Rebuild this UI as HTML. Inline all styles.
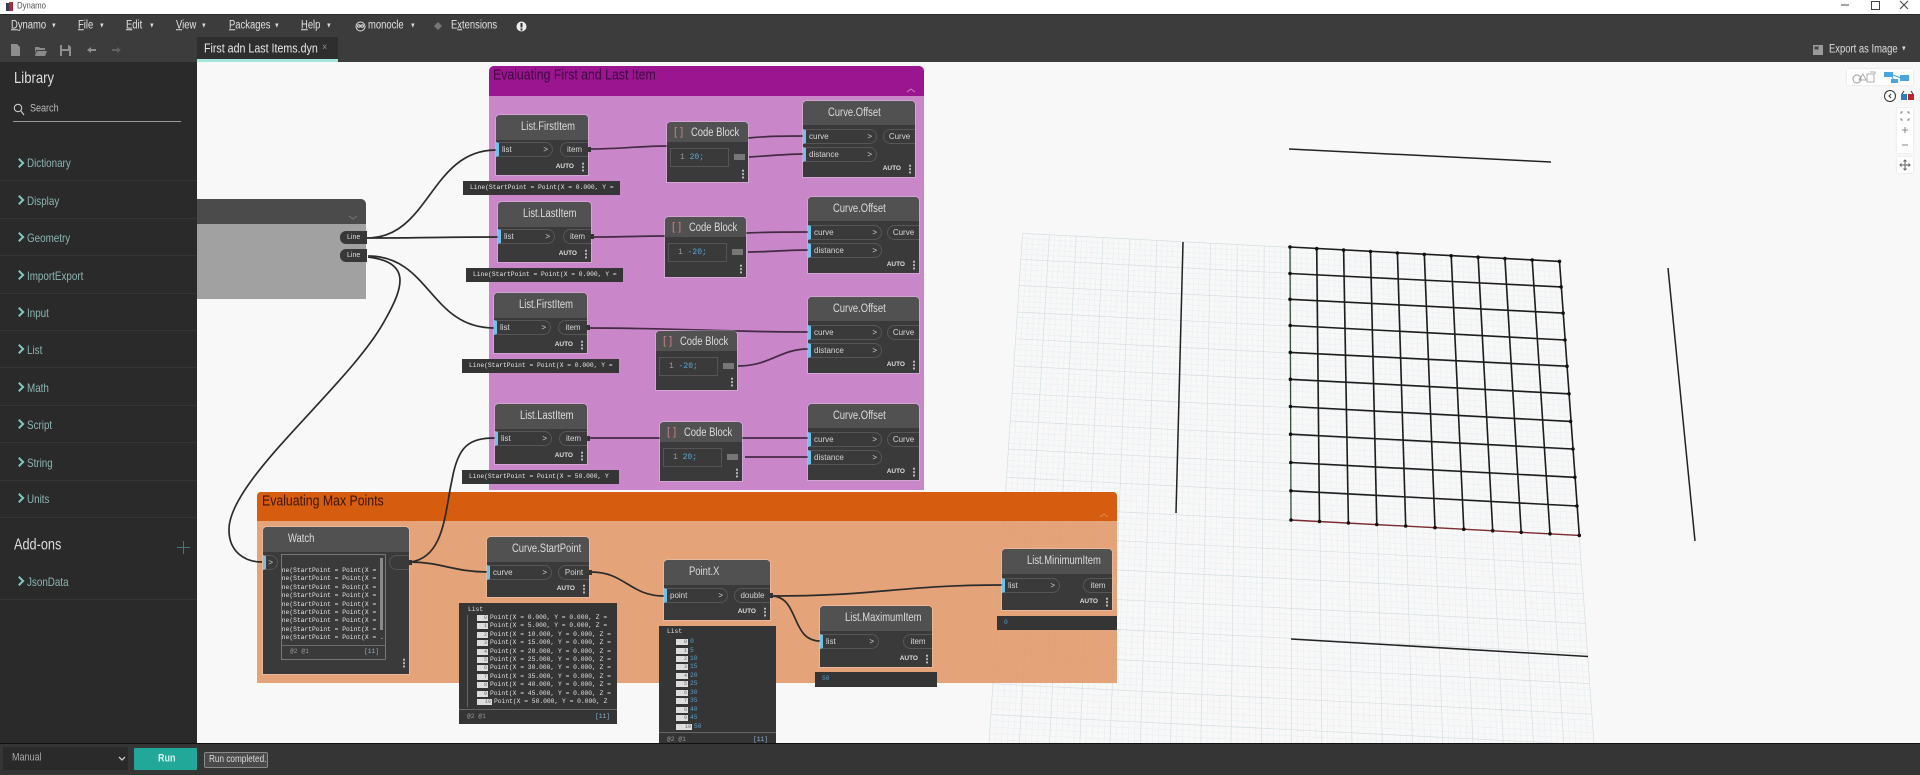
<!DOCTYPE html>
<html lang="en"><head><meta charset="utf-8"><title>Dynamo</title>
<style>
*{box-sizing:border-box;margin:0;padding:0}
html,body{width:1920px;height:775px;overflow:hidden;background:#353535}
#r{position:absolute;left:0;top:0;width:1920px;height:775px;overflow:hidden;font-family:"Liberation Sans",sans-serif;filter:blur(.3px)}
#r div,#r span,#r>svg,#r i{position:absolute;white-space:nowrap;display:block;font-style:normal}
.t{transform:translateY(-50%) scaleX(.82);transform-origin:0 50%;line-height:1}
.m{font-size:11.5px;color:#e2e2e2;top:26px}
.c{font-size:7px;color:#ddd;top:26px}
.cat{left:27px;font-size:12px;color:#8db5b2}
.chev{left:16px;width:7px;height:7px;border-top:2px solid #7fc8bf;border-right:2px solid #7fc8bf;transform:translateY(-50%) rotate(45deg)}
.sep{left:0;width:197px;height:1px;background:#353535}
.n{background:#3a3a3a;box-shadow:0 0 0 1px rgba(235,235,235,.3);border-radius:4px 4px 0 0}
.n .h{left:0;top:0;right:0;height:25px;background:#515151;border-radius:4px 4px 0 0}
.ti{left:25px;top:0;line-height:25px;font-size:11.5px;color:#dcdcdc;transform:scaleX(.82);transform-origin:0 50%}
.p{height:15px;border:1px solid #565656;font:8px/13px "Liberation Sans",sans-serif;color:#d5d5d5}
.p.i{left:0;border-left:3px solid #6fc3ea;border-radius:0 8px 8px 0;padding-left:3px}
.p.i::after{content:">";position:absolute;right:4px;top:0;font-size:8px}
.p.o{right:0;border-right:0;border-radius:8px 0 0 8px;text-align:center}
.p.x::after{content:"";position:absolute;right:-3px;top:4px;width:3px;height:5px;background:#333}
.au{right:14px;bottom:4px;font:bold 6.5px/8px "Liberation Sans",sans-serif;color:#ddd}
.ds{right:4px;bottom:3px;width:2px;height:10px;background:radial-gradient(circle,#bbb 1px,transparent 1.1px) 0 0/2px 3.4px}
.pv{background:#353535;font:6.3px/14px "Liberation Mono",monospace;color:#e8e8e8;padding-left:7px;height:14px;overflow:hidden}
.cb .h{height:20px}
.cb .ti{line-height:22px;left:24px}
.br{left:7px;top:0;font:11px/20px "Liberation Sans",sans-serif;color:#c98080}
.bx{left:3px;top:26px;width:59px;height:19px;border:1px solid #555;font:8px/17px "Liberation Mono",monospace;color:#999;padding-left:9px}
.bx b{font-weight:normal;color:#58a9d8}
.ot{left:67px;top:32px;width:11px;height:6px;background:#777}
.w{left:0;font:6.3px/8.4px "Liberation Mono",monospace;color:#e4e4e4}
.ch{height:6px;background:#ddd;font:5px/6px "Liberation Mono",monospace;color:#666;text-align:right;padding-right:1px}
.li{font:6.3px/8px "Liberation Mono",monospace;color:#e0e0e0}
.v{font:6.3px/8px "Liberation Mono",monospace;color:#5a9fc8}
.ic{left:6px;top:5px;width:15px;height:15px}
</style></head><body>
<div id="r">
<!-- canvas -->
<div style="left:197px;top:62px;width:1723px;height:682px;background:#f8f8f8"></div>
<svg style="left:0;top:0" width="1920" height="775" fill="none">
<path id="g1" stroke="#e9eff1" stroke-width=".6"/>
<path id="g2" stroke="#d5dfe3" stroke-width=".7"/>
<path d="M1289 149L1551 162M1183 242L1176 513M1668 268L1695 541M1291 639L1588 656.5" stroke="#222" stroke-width="1.5"/>
<path stroke="#1d1d1d" stroke-width="1.6" d="M1290 247L1559.5 261.4M1290 273.5L1561.1 286.9M1290 299.3L1563.1 313.1M1290.2 325.5L1565 340M1290.3 352.4L1567 366.2M1290.4 379.3L1569 393.8M1290.5 406.5L1570.6 421.4M1290.6 434.2L1573 449M1290.8 462.5L1574.9 477.3M1290.9 490.8L1576.9 506M1316.7 248.7L1319.5 521.4M1343.6 250.1L1348.4 522.9M1370.5 251.5L1376.8 524.5M1397.4 253L1405.7 526M1424.3 254.4L1435 527.6M1451.2 255.8L1463.8 529.2M1478.1 257.2L1492.7 530.7M1504.9 258.6L1521.2 532.3M1532.2 260L1550 533.8M1559.5 261.4L1579.3 535.4"/>
<path stroke="#35503a" stroke-width="1.3" d="M1290 247L1291 520"/>
<path stroke="#7a2a30" stroke-width="1.4" d="M1291 520L1579.3 535.4"/>
<path stroke="#111" stroke-width="3.6" stroke-linecap="round" d="M1290 247h0M1316.7 248.7h0M1343.6 250.1h0M1370.5 251.5h0M1397.4 253h0M1424.3 254.4h0M1451.2 255.8h0M1478.1 257.2h0M1504.9 258.6h0M1532.2 260h0M1559.5 261.4h0M1561.1 286.9h0M1563.1 313.1h0M1565 340h0M1567 366.2h0M1569 393.8h0M1570.6 421.4h0M1573 449h0M1574.9 477.3h0M1576.9 506h0M1579.3 535.4h0M1290 273.5h0M1290 299.3h0M1290.2 325.5h0M1290.3 352.4h0M1290.4 379.3h0M1290.5 406.5h0M1290.6 434.2h0M1290.8 462.5h0M1290.9 490.8h0M1291 520h0M1319.5 521.4h0M1348.4 522.9h0M1376.8 524.5h0M1405.7 526h0M1435 527.6h0M1463.8 529.2h0M1492.7 530.7h0M1521.2 532.3h0M1550 533.8h0"/>
</svg>
<!-- controls top right -->
<div style="left:1847px;top:69px;width:66px;height:16px;background:#fff;box-shadow:0 0 2px #ddd"></div>
<svg style="left:1850px;top:70px" width="62" height="15" fill="none"><circle cx="7" cy="9" r="4" stroke="#999"/><path d="M9 10l4-6 3 6zM17 4h7v8h-7zM20 2h5v2" stroke="#999" stroke-width=".8"/><rect x="34" y="2" width="9" height="5" fill="#4aa6e0"/><rect x="41" y="9" width="7" height="4" fill="#4aa6e0"/><rect x="50" y="5" width="9" height="6" fill="#4aa6e0"/><path d="M43 5l8 3M44 10l-2-3" stroke="#4aa6e0"/></svg>
<svg style="left:1883px;top:89px" width="32" height="15" fill="none"><circle cx="7" cy="7" r="5.5" stroke="#333" fill="#fff"/><path d="M8 5L6 7l2 2" stroke="#333"/><rect x="18" y="5" width="6" height="6" fill="#2b7fc0"/><rect x="25" y="5" width="6" height="6" fill="#c0242c"/><path d="M19 5l2-3M30 5l-2-3" stroke="#333"/></svg>
<div style="left:1897px;top:108px;width:16px;height:45px;background:#fff;box-shadow:0 0 2px #ddd"></div>
<div style="left:1897px;top:157px;width:16px;height:16px;background:#fff;box-shadow:0 0 2px #ddd"></div>
<svg style="left:1897px;top:108px" width="16" height="66" fill="none" stroke="#888"><path d="M4 6V4h2M10 4h2v2M4 10v2h2M10 12h2v-2M5 22h6M8 19v6M5 37h6" /><path d="M8 52v10M3 57h10M6.5 53.5L8 52l1.5 1.5M6.5 60.5L8 62l1.500-1.500M4.500 55.500L3 57l1.500 1.500M11.500 55.500L13 57l-1.500 1.500" stroke="#666"/></svg>

<!-- purple group -->
<div style="left:489px;top:66px;width:435px;height:424px;background:#c987c9;border-radius:5px 5px 0 0"></div>
<div style="left:489px;top:66px;width:435px;height:30px;background:#9b1590;border-radius:5px 5px 0 0"></div>
<span class="t" style="left:493px;top:75px;font-size:15px;color:#3c0a3e">Evaluating First and Last Item</span>
<svg style="left:905px;top:86px" width="14" height="8" fill="none"><path d="M2 6l4-3 4 3" stroke="#c878c0"/></svg>
<!-- orange group -->
<div style="left:257px;top:492px;width:860px;height:191px;background:rgba(226,149,100,.86);border-radius:4px 4px 0 0"></div>
<div style="left:257px;top:492px;width:860px;height:29px;background:#d65c0f;border-radius:4px 4px 0 0"></div>
<span class="t" style="left:262px;top:501px;font-size:15px;color:#3a1600">Evaluating Max Points</span>
<svg style="left:1098px;top:511px" width="14" height="8" fill="none"><path d="M2 6l4-3 4 3" stroke="#e08a50"/></svg>

<!-- unnamed input node -->
<div style="left:197px;top:224px;width:169px;height:75px;background:#a1a1a1"></div>
<div style="left:197px;top:199px;width:169px;height:25px;background:#4b4b4b;border-radius:0 5px 0 0"></div>
<svg style="left:347px;top:214px" width="14" height="8" fill="none"><path d="M2 2l4 3 4-3" stroke="#777"/></svg>
<div style="left:340px;top:231px;width:27px;height:13px;background:#383838;border-radius:6px 0 0 6px;color:#ddd;font:7px/13px 'Liberation Sans',sans-serif;padding-left:7px">Line</div>
<div style="left:340px;top:249px;width:27px;height:13px;background:#383838;border-radius:6px 0 0 6px;color:#ddd;font:7px/13px 'Liberation Sans',sans-serif;padding-left:7px">Line</div>

<!-- wires -->
<svg style="left:0;top:0" width="1920" height="775" fill="none" stroke="#2b2b2b" stroke-width="1.7">
<path d="M367 238C430 238 430 150 496 150M367 238C430 238 440 237 499 237M368 256C430 256 430 328 494 328M368 257C410 262 405 285 385 320C350 385 228 480 229 530C229 552 245 562 262 562M410 562C445 558 445 510 452 480C458 445 470 438 495 438M410 562C440 562 455 572 487 572M591 572C625 572 630 596 664 596M771 596C880 596 900 585 1002 585M771 596C800 596 790 641 820 641"/>
<path stroke="#452a45" d="M589 149C620 149 640 146 667 146M748 138C770 136 785 136 803 136M749 157C770 156 785 154 803 154M592 237C620 237 640 236 665 236M746 233C770 232 785 232 808 232M748 252C770 252 785 250 808 250M588 328C680 328 720 332 808 332M738 366C770 366 780 349 808 349M589 438H660M742 438H808M745 457H808"/>
</svg>

<!-- List.FirstItem 1 -->
<div class="n" style="left:496px;top:115px;width:92px;height:60px"><div class="h"></div>
<svg class="ic" viewBox="0 0 15 15"><rect x="2" y="8" width="4" height="4" fill="#3d8cc4"/><rect x="7" y="9" width="5" height="3" fill="#3d8cc4"/><rect x="3" y="3" width="2" height="3" fill="#b47a6a"/></svg>
<span class="ti">List.FirstItem</span><div class="p i" style="top:27px;width:57px">list</div><div class="p o x" style="top:27px;width:28px">item</div><span class="au">AUTO</span><i class="ds"></i></div>
<div class="pv" style="left:463px;top:181px;width:157px">Line(StartPoint = Point(X = 0.000, Y =</div>
<!-- List.LastItem 1 -->
<div class="n" style="left:498px;top:202px;width:93px;height:60px"><div class="h"></div>
<svg class="ic" viewBox="0 0 15 15"><rect x="2" y="8" width="6" height="4" fill="#3d8cc4"/><rect x="9" y="7" width="3" height="5" fill="#bbb"/><rect x="9" y="3" width="2" height="3" fill="#b47a6a"/></svg>
<span class="ti">List.LastItem</span><div class="p i" style="top:27px;width:57px">list</div><div class="p o x" style="top:27px;width:28px">item</div><span class="au">AUTO</span><i class="ds"></i></div>
<div class="pv" style="left:466px;top:268px;width:157px">Line(StartPoint = Point(X = 0.000, Y =</div>
<!-- List.FirstItem 2 -->
<div class="n" style="left:494px;top:293px;width:93px;height:60px"><div class="h"></div>
<svg class="ic" viewBox="0 0 15 15"><rect x="2" y="8" width="4" height="4" fill="#3d8cc4"/><rect x="7" y="9" width="5" height="3" fill="#3d8cc4"/><rect x="3" y="3" width="2" height="3" fill="#b47a6a"/></svg>
<span class="ti">List.FirstItem</span><div class="p i" style="top:27px;width:57px">list</div><div class="p o x" style="top:27px;width:29px">item</div><span class="au">AUTO</span><i class="ds"></i></div>
<div class="pv" style="left:462px;top:359px;width:157px">Line(StartPoint = Point(X = 0.000, Y =</div>
<!-- List.LastItem 2 -->
<div class="n" style="left:495px;top:404px;width:92px;height:60px"><div class="h"></div>
<svg class="ic" viewBox="0 0 15 15"><rect x="2" y="8" width="6" height="4" fill="#3d8cc4"/><rect x="9" y="7" width="3" height="5" fill="#bbb"/><rect x="9" y="3" width="2" height="3" fill="#b47a6a"/></svg>
<span class="ti">List.LastItem</span><div class="p i" style="top:27px;width:57px">list</div><div class="p o x" style="top:27px;width:28px">item</div><span class="au">AUTO</span><i class="ds"></i></div>
<div class="pv" style="left:462px;top:470px;width:157px">Line(StartPoint = Point(X = 50.000, Y</div>

<!-- code blocks -->
<div class="n cb" style="left:667px;top:122px;width:81px;height:60px"><div class="h"></div><span class="br">[ ]</span><span class="ti">Code Block</span><div class="bx">1 <b>20;</b></div><i class="ot"></i><i class="ds"></i></div>
<div class="n cb" style="left:665px;top:217px;width:81px;height:60px"><div class="h"></div><span class="br">[ ]</span><span class="ti">Code Block</span><div class="bx">1 <b>-20;</b></div><i class="ot"></i><i class="ds"></i></div>
<div class="n cb" style="left:656px;top:331px;width:81px;height:59px"><div class="h"></div><span class="br">[ ]</span><span class="ti">Code Block</span><div class="bx">1 <b>-20;</b></div><i class="ot"></i><i class="ds"></i></div>
<div class="n cb" style="left:660px;top:422px;width:82px;height:59px"><div class="h"></div><span class="br">[ ]</span><span class="ti">Code Block</span><div class="bx">1 <b>20;</b></div><i class="ot"></i><i class="ds"></i></div>

<!-- Curve.Offset -->
<div class="n" style="left:803px;top:101px;width:112px;height:76px"><div class="h" style="height:24px"></div>
<svg class="ic" viewBox="0 0 15 15" fill="none" stroke="#bbb"><path d="M7 13C2 12 1 6 4 3c3-2 9-1 10 3 0 3-3 4-5 3"/><path d="M7 10c-2-2-2-4 0-5s4 0 4 2" stroke="#3d8cc4"/></svg>
<span class="ti" style="line-height:24px">Curve.Offset</span><div class="p i" style="top:28px;width:74px">curve</div><div class="p i" style="top:46px;width:74px">distance</div><div class="p o" style="top:28px;width:32px">Curve</div><span class="au">AUTO</span><i class="ds"></i></div>
<div class="n" style="left:808px;top:197px;width:111px;height:76px"><div class="h" style="height:24px"></div>
<svg class="ic" viewBox="0 0 15 15" fill="none" stroke="#bbb"><path d="M7 13C2 12 1 6 4 3c3-2 9-1 10 3 0 3-3 4-5 3"/><path d="M7 10c-2-2-2-4 0-5s4 0 4 2" stroke="#3d8cc4"/></svg>
<span class="ti" style="line-height:24px">Curve.Offset</span><div class="p i" style="top:28px;width:74px">curve</div><div class="p i" style="top:46px;width:74px">distance</div><div class="p o" style="top:28px;width:32px">Curve</div><span class="au">AUTO</span><i class="ds"></i></div>
<div class="n" style="left:808px;top:297px;width:111px;height:76px"><div class="h" style="height:24px"></div>
<svg class="ic" viewBox="0 0 15 15" fill="none" stroke="#bbb"><path d="M7 13C2 12 1 6 4 3c3-2 9-1 10 3 0 3-3 4-5 3"/><path d="M7 10c-2-2-2-4 0-5s4 0 4 2" stroke="#3d8cc4"/></svg>
<span class="ti" style="line-height:24px">Curve.Offset</span><div class="p i" style="top:28px;width:74px">curve</div><div class="p i" style="top:46px;width:74px">distance</div><div class="p o" style="top:28px;width:32px">Curve</div><span class="au">AUTO</span><i class="ds"></i></div>
<div class="n" style="left:808px;top:404px;width:111px;height:76px"><div class="h" style="height:24px"></div>
<svg class="ic" viewBox="0 0 15 15" fill="none" stroke="#bbb"><path d="M7 13C2 12 1 6 4 3c3-2 9-1 10 3 0 3-3 4-5 3"/><path d="M7 10c-2-2-2-4 0-5s4 0 4 2" stroke="#3d8cc4"/></svg>
<span class="ti" style="line-height:24px">Curve.Offset</span><div class="p i" style="top:28px;width:74px">curve</div><div class="p i" style="top:46px;width:74px">distance</div><div class="p o" style="top:28px;width:32px">Curve</div><span class="au">AUTO</span><i class="ds"></i></div>

<!-- Watch -->
<div class="n" style="left:263px;top:527px;width:146px;height:147px"><div class="h"></div>
<svg class="ic" viewBox="0 0 15 15" fill="none" stroke="#7fa9c8"><rect x="2" y="3" width="11" height="10"/><circle cx="5.500" cy="9" r="1.500"/><circle cx="9.500" cy="9" r="1.500"/></svg>
<span class="ti">Watch</span>
<div class="p i" style="top:28px;width:15px;padding:0"></div><div class="p o x" style="top:28px;width:20px"></div>
<div style="left:18px;top:27px;width:105px;height:106px;border:1px solid #777;overflow:hidden;background:#3a3a3a">
<div class="w" style="top:12px;left:-4px;width:105px;overflow:hidden">ine(StartPoint = Point(X = 0<br>ine(StartPoint = Point(X = 5<br>ine(StartPoint = Point(X =<br>ine(StartPoint = Point(X =<br>ine(StartPoint = Point(X =<br>ine(StartPoint = Point(X =<br>ine(StartPoint = Point(X =<br>ine(StartPoint = Point(X =<br>ine(StartPoint = Point(X = .</div>
<div style="left:98px;top:3px;width:3px;height:72px;background:#8a8a8a"></div>
<div style="left:0;top:90px;width:103px;height:14px;background:#3a3a3a;border-top:1px solid #6a6a6a"></div>
<span class="li" style="left:8px;top:93px;color:#999">@2 @1</span><span class="li" style="left:82px;top:93px;color:#8ab0c8">[11]</span>
</div><i class="ds" style="bottom:6px"></i></div>

<!-- Curve.StartPoint -->
<div class="n" style="left:487px;top:537px;width:102px;height:60px"><div class="h"></div>
<svg class="ic" viewBox="0 0 15 15" fill="none" stroke="#6aa7d8" stroke-width="1.500"><path d="M1 13C3 6 8 10 14 3"/></svg>
<span class="ti">Curve.StartPoint</span><div class="p i" style="top:28px;width:65px">curve</div><div class="p o x" style="top:28px;width:31px">Point</div><span class="au">AUTO</span><i class="ds"></i></div>
<!-- list preview 1 -->
<div style="left:459px;top:603px;width:158px;height:121px;background:#353535">
<span class="li" style="left:9px;top:3px">List</span>
<div style="left:8px;top:12px;width:1px;height:92px;background:#666"></div>
<div class="ch" style="left:18px;top:12px;width:11px">0</div><span class="li" style="left:31px;top:11px">Point(X = 0.000, Y = 0.000, Z =</span>
<div class="ch" style="left:18px;top:20.400px;width:11px">1</div><span class="li" style="left:31px;top:19.400px">Point(X = 5.000, Y = 0.000, Z =</span>
<div class="ch" style="left:18px;top:28.800px;width:11px">2</div><span class="li" style="left:31px;top:27.800px">Point(X = 10.000, Y = 0.000, Z =</span>
<div class="ch" style="left:18px;top:37.200px;width:11px">3</div><span class="li" style="left:31px;top:36.200px">Point(X = 15.000, Y = 0.000, Z =</span>
<div class="ch" style="left:18px;top:45.600px;width:11px">4</div><span class="li" style="left:31px;top:44.600px">Point(X = 20.000, Y = 0.000, Z =</span>
<div class="ch" style="left:18px;top:54px;width:11px">5</div><span class="li" style="left:31px;top:53px">Point(X = 25.000, Y = 0.000, Z =</span>
<div class="ch" style="left:18px;top:62.400px;width:11px">6</div><span class="li" style="left:31px;top:61.400px">Point(X = 30.000, Y = 0.000, Z =</span>
<div class="ch" style="left:18px;top:70.800px;width:11px">7</div><span class="li" style="left:31px;top:69.800px">Point(X = 35.000, Y = 0.000, Z =</span>
<div class="ch" style="left:18px;top:79.200px;width:11px">8</div><span class="li" style="left:31px;top:78.200px">Point(X = 40.000, Y = 0.000, Z =</span>
<div class="ch" style="left:18px;top:87.600px;width:11px">9</div><span class="li" style="left:31px;top:86.600px">Point(X = 45.000, Y = 0.000, Z =</span>
<div class="ch" style="left:18px;top:96px;width:15px">10</div><span class="li" style="left:35px;top:95px">Point(X = 50.000, Y = 0.000, Z</span>
<div style="left:0;top:106px;width:158px;height:1px;background:#666"></div>
<span class="li" style="left:8px;top:110px;color:#999">@2 @1</span><span class="li" style="left:136px;top:110px;color:#8ab0c8">[11]</span>
</div>

<!-- Point.X -->
<div class="n" style="left:664px;top:560px;width:106px;height:60px"><div class="h"></div>
<svg class="ic" viewBox="0 0 15 15"><rect x="6" y="2" width="4" height="5" fill="#4a90d0"/><rect x="7" y="9" width="2" height="4" fill="#999"/></svg>
<span class="ti">Point.X</span><div class="p i" style="top:28px;width:64px">point</div><div class="p o x" style="top:28px;width:36px">double</div><span class="au">AUTO</span><i class="ds"></i></div>
<!-- list preview 2 -->
<div style="left:659px;top:626px;width:117px;height:117px;background:#353535;overflow:hidden">
<span class="li" style="left:8px;top:2px">List</span>
<div class="ch" style="left:17px;top:13px;width:12px">0</div><span class="v" style="left:31px;top:12px">0</span>
<div class="ch" style="left:17px;top:21.500px;width:12px">1</div><span class="v" style="left:31px;top:20.500px">5</span>
<div class="ch" style="left:17px;top:30px;width:12px">2</div><span class="v" style="left:31px;top:29px">10</span>
<div class="ch" style="left:17px;top:38.400px;width:12px">3</div><span class="v" style="left:31px;top:37.400px">15</span>
<div class="ch" style="left:17px;top:46.900px;width:12px">4</div><span class="v" style="left:31px;top:45.900px">20</span>
<div class="ch" style="left:17px;top:55.300px;width:12px">5</div><span class="v" style="left:31px;top:54.300px">25</span>
<div class="ch" style="left:17px;top:63.800px;width:12px">6</div><span class="v" style="left:31px;top:62.800px">30</span>
<div class="ch" style="left:17px;top:72.200px;width:12px">7</div><span class="v" style="left:31px;top:71.200px">35</span>
<div class="ch" style="left:17px;top:80.700px;width:12px">8</div><span class="v" style="left:31px;top:79.700px">40</span>
<div class="ch" style="left:17px;top:89.100px;width:12px">9</div><span class="v" style="left:31px;top:88.100px">45</span>
<div class="ch" style="left:17px;top:97.600px;width:16px">10</div><span class="v" style="left:35px;top:96.600px">50</span>
<div style="left:0;top:106px;width:117px;height:1px;background:#666"></div>
<span class="li" style="left:8px;top:110px;color:#999">@2 @1</span><span class="li" style="left:94px;top:110px;color:#8ab0c8">[11]</span>
</div>

<!-- Max -->
<div class="n" style="left:820px;top:606px;width:112px;height:61px"><div class="h"></div>
<svg class="ic" viewBox="0 0 15 15" fill="none" stroke="#5a9fd8"><path d="M1 12V8h3v4M5 12V3h4v9M10 12V9h4v3"/></svg>
<span class="ti">List.MaximumItem</span><div class="p i" style="top:28px;width:59px">list</div><div class="p o" style="top:28px;width:29px">item</div><span class="au">AUTO</span><i class="ds"></i></div>
<div class="pv" style="left:815px;top:672px;width:122px;height:15px;color:#5a9fc8">50</div>
<!-- Min -->
<div class="n" style="left:1002px;top:549px;width:110px;height:61px"><div class="h"></div>
<svg class="ic" viewBox="0 0 15 15" fill="none" stroke="#5a9fd8"><path d="M1 12V7h3v5M6 12V9h2v3M10 12V4h3v8"/></svg>
<span class="ti">List.MinimumItem</span><div class="p i" style="top:29px;width:58px">list</div><div class="p o" style="top:29px;width:29px">item</div><span class="au">AUTO</span><i class="ds"></i></div>
<div class="pv" style="left:997px;top:616px;width:120px;color:#5a9fc8">0</div>

<!-- title bar -->
<div style="left:0;top:0;width:1920px;height:15px;background:#fff;border-bottom:1px solid #2a2a2a"></div>
<svg style="left:4px;top:1px" width="11" height="12"><rect x="2" y="2" width="4" height="8" fill="#3a3a4a"/><rect x="5" y="1" width="4" height="9" fill="#a03040"/></svg>
<span class="t" style="left:17px;top:6px;font-size:9.500px;color:#555">Dynamo</span>
<svg style="left:1838px;top:0" width="80" height="12" fill="none" stroke="#444"><path d="M3 5h8"/><rect x="33.500" y="1.500" width="8" height="8"/><path d="M62 1l8 8M70 1l-8 8"/></svg>
<!-- menu -->
<div style="left:0;top:15px;width:1920px;height:47px;background:#3c3c3c"></div>
<span class="t m" style="left:11px"><u>D</u>ynamo</span><span class="t c" style="left:51px">▼</span>
<span class="t m" style="left:78px"><u>F</u>ile</span><span class="t c" style="left:99px">▼</span>
<span class="t m" style="left:126px"><u>E</u>dit</span><span class="t c" style="left:149px">▼</span>
<span class="t m" style="left:176px"><u>V</u>iew</span><span class="t c" style="left:201px">▼</span>
<span class="t m" style="left:229px"><u>P</u>ackages</span><span class="t c" style="left:274px">▼</span>
<span class="t m" style="left:301px"><u>H</u>elp</span><span class="t c" style="left:326px">▼</span>
<svg style="left:355px;top:21px" width="11" height="11" fill="none" stroke="#ddd"><circle cx="5.500" cy="5.500" r="4.500"/><circle cx="3.800" cy="5" r="1.300"/><circle cx="7.200" cy="5" r="1.300"/></svg>
<span class="t m" style="left:368px">monocle</span><span class="t c" style="left:410px">▼</span>
<svg style="left:433px;top:21px" width="10" height="10"><path d="M5 1l4 4-4 4-4-4z" fill="#777"/></svg>
<span class="t m" style="left:451px">E<u>x</u>tensions</span>
<svg style="left:516px;top:21px" width="11" height="11"><circle cx="5.500" cy="5.500" r="5" fill="#eee"/><rect x="4.500" y="2" width="2" height="4.500" fill="#333"/><rect x="4.500" y="7.500" width="2" height="2" fill="#333"/></svg>
<!-- toolbar icons -->
<svg style="left:9px;top:43px" width="120" height="14" fill="#8e8e8e"><path d="M2 1h6l3 3v9H2z"/><path d="M26 4h4l1 1h5v2h-9l-1 5zM28 8h10l-2 5H26z" fill="#8a8a8a"/><path d="M51 2h9l2 2v9H51zM53 2v4h6V2zM53 8v5h7V8z" fill-rule="evenodd"/><path d="M78 7l4-3v2h5v2h-5v2z"/><path d="M112 7l-4-3v2h-5v2h5v2z" fill="#606060"/></svg>
<!-- tab -->
<div style="left:197px;top:37px;width:141px;height:25px;background:#2e2e2e;border-bottom:3px solid #a5e6dc"></div>
<span class="t" style="left:204px;top:48px;font-size:13px;color:#e8e8e8">First adn Last Items.dyn</span>
<span class="t" style="left:322px;top:48px;font-size:11px;color:#888">×</span>
<!-- export -->
<svg style="left:1813px;top:45px" width="10" height="10"><rect width="10" height="10" fill="#9a9a9a"/><rect x="1.500" y="1.500" width="4" height="3" fill="#444"/></svg>
<span class="t m" style="left:1829px;top:50px;color:#ddd">Export as Image</span><span class="t c" style="left:1901px;top:49px">▼</span>

<!-- library -->
<div style="left:0;top:62px;width:197px;height:682px;background:#2a2a2a"></div>
<span class="t" style="left:14px;top:79px;font-size:16px;color:#ddd">Library</span>
<svg style="left:13px;top:103px" width="12" height="13" fill="none" stroke="#ccc" stroke-width="1.100"><circle cx="5" cy="5" r="3.700"/><path d="M8 8l3 4"/></svg>
<span class="t" style="left:30px;top:109px;font-size:11px;color:#bbb">Search</span>
<div style="left:13px;top:120.500px;width:168px;height:1.500px;background:#9a9a9a"></div>
<i class="chev" style="top:163px"></i><span class="t cat" style="top:163px">Dictionary</span>
<i class="chev" style="top:200px"></i><span class="t cat" style="top:201px">Display</span>
<i class="chev" style="top:237px"></i><span class="t cat" style="top:238px">Geometry</span>
<i class="chev" style="top:275px"></i><span class="t cat" style="top:276px">ImportExport</span>
<i class="chev" style="top:312px"></i><span class="t cat" style="top:313px">Input</span>
<i class="chev" style="top:349px"></i><span class="t cat" style="top:350px">List</span>
<i class="chev" style="top:387px"></i><span class="t cat" style="top:388px">Math</span>
<i class="chev" style="top:424px"></i><span class="t cat" style="top:425px">Script</span>
<i class="chev" style="top:462px"></i><span class="t cat" style="top:463px">String</span>
<i class="chev" style="top:498px"></i><span class="t cat" style="top:499px">Units</span>
<i class="sep" style="top:180px"></i><i class="sep" style="top:218px"></i><i class="sep" style="top:255px"></i><i class="sep" style="top:293px"></i><i class="sep" style="top:330px"></i><i class="sep" style="top:367px"></i><i class="sep" style="top:405px"></i><i class="sep" style="top:442px"></i><i class="sep" style="top:480px"></i><i class="sep" style="top:517px"></i><i class="sep" style="top:599px"></i>
<span class="t" style="left:14px;top:545px;font-size:15.500px;color:#ddd">Add-ons</span>
<svg style="left:177px;top:541px" width="13" height="13" stroke="#3f7a74"><path d="M6.500 0v13M0 6.500h13"/></svg>
<i class="chev" style="top:581px"></i><span class="t cat" style="top:582px">JsonData</span>

<!-- bottom -->
<div style="left:0;top:743px;width:1920px;height:32px;background:#353535;border-top:1px solid #111"></div>
<div style="left:3px;top:747px;width:125px;height:23px;background:#2a2a2a"></div>
<span class="t" style="left:12px;top:758px;font-size:11px;color:#aaa">Manual</span>
<svg style="left:118px;top:756px" width="8" height="6" fill="none" stroke="#ccc" stroke-width="1.300"><path d="M1 1l3 3 3-3"/></svg>
<div style="left:134px;top:748px;width:63px;height:22px;background:#22a899;border-radius:1px"></div>
<span class="t" style="left:158px;top:759px;font-size:11px;font-weight:bold;color:#d8f5f0">Run</span>
<div style="left:204px;top:752px;width:64px;height:16px;border:1px solid #8a8a8a;border-radius:2px;background:#4a4a4a"></div>
<span class="t" style="left:209px;top:760px;font-size:10px;color:#ddd">Run completed.</span>
</div>
<script>
(function(){var a="",b="",m;
function yL(k){return 233.4+25.75*k+.15*k*k}
function yR(k){return 261.4+25.9*k+.15*k*k}
function xL(y){return 1022.5-(y-234)*.0658}
function xR(y){return 1559.5+(y-261)*.0712}
for(m=0;m<=95;m++){var k=m/5,p=yL(k),q=yR(k),s="M"+xL(p).toFixed(1)+" "+p.toFixed(1)+"L"+xR(q).toFixed(1)+" "+q.toFixed(1);if(m%5)a+=s;else b+=s}
for(m=0;m<=100;m++){var t=m/100,x0=1022.5+537*t,y0=234+27.4*t,x1=989+605*t,s2="M"+x0.toFixed(1)+" "+y0.toFixed(1)+"L"+x1.toFixed(1)+" 744";if(m%5)a+=s2;else b+=s2}
document.getElementById("g1").setAttribute("d",a);document.getElementById("g2").setAttribute("d",b);})();
</script>
</body></html>
